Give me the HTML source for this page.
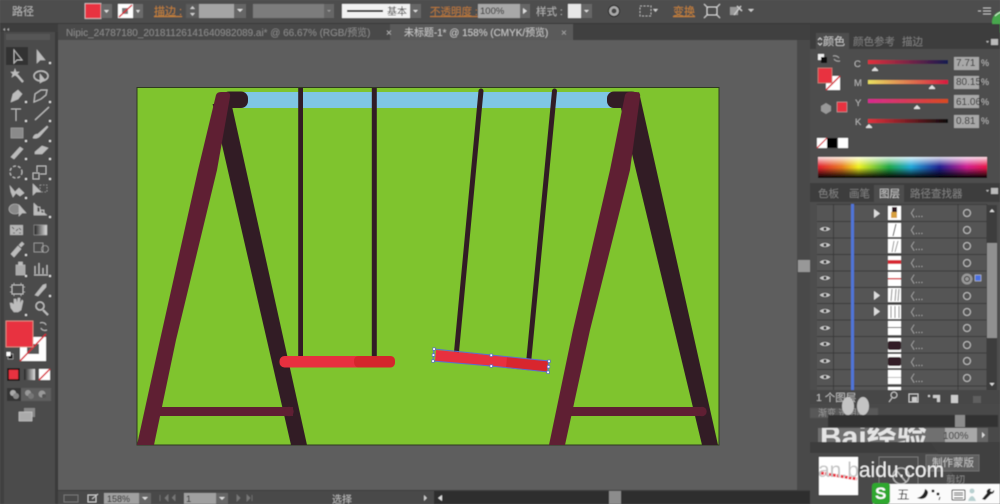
<!DOCTYPE html>
<html lang="zh"><head><meta charset="utf-8"><title>Illustrator</title>
<style>
html,body{margin:0;padding:0;width:1000px;height:504px;overflow:hidden;background:#5e5e5e}
svg{display:block}
text{font-family:"Liberation Sans","Noto Sans CJK SC",sans-serif}
</style></head><body>
<svg width="1000" height="504" viewBox="0 0 1000 504" xmlns="http://www.w3.org/2000/svg">
<defs><filter id="b" x="-5%" y="-5%" width="110%" height="110%"><feGaussianBlur stdDeviation="0.55"/></filter>
<clipPath id="wm"><rect x="810" y="428" width="128" height="14"/></clipPath>
<linearGradient id="spH" x1="0" x2="1"><stop offset="0" stop-color="#e02030"/><stop offset=".14" stop-color="#e87a20"/><stop offset=".24" stop-color="#eef020"/><stop offset=".42" stop-color="#20a848"/><stop offset=".55" stop-color="#20a8d8"/><stop offset=".72" stop-color="#202090"/><stop offset=".88" stop-color="#d02090"/><stop offset="1" stop-color="#e81848"/></linearGradient>
<linearGradient id="spW" x1="0" x2="0" y1="0" y2="1"><stop offset="0" stop-color="#fff" stop-opacity=".85"/><stop offset=".45" stop-color="#fff" stop-opacity="0"/><stop offset=".5" stop-color="#000" stop-opacity="0"/><stop offset="1" stop-color="#000"/></linearGradient>
<linearGradient id="c1" x1="0" x2="1"><stop offset="0" stop-color="#e2303c"/><stop offset="1" stop-color="#141a50"/></linearGradient>
<linearGradient id="c2" x1="0" x2="1"><stop offset="0" stop-color="#e8e060"/><stop offset="1" stop-color="#d81840"/></linearGradient>
<linearGradient id="c3" x1="0" x2="1"><stop offset="0" stop-color="#d82a90"/><stop offset="1" stop-color="#d84a20"/></linearGradient>
<linearGradient id="c4" x1="0" x2="1"><stop offset="0" stop-color="#e2303c"/><stop offset="1" stop-color="#0c0c0c"/></linearGradient>
<linearGradient id="gr" x1="0" x2="1"><stop offset="0" stop-color="#222"/><stop offset="1" stop-color="#ddd"/></linearGradient>
</defs>

<!-- base -->
<rect width="1000" height="504" fill="#5e5e5e"/>

<!-- artboard -->
<rect x="136.500" y="87" width="583" height="358.500" fill="#2e3a20"/>
<rect x="137.500" y="88" width="581" height="356.500" fill="#7fc42e"/>
<rect x="240" y="92" width="375" height="16" fill="#7fc6e4"/>
<!-- left frame -->
<polygon points="212.600,104 231.500,104 307,445 291,445" fill="#321c25"/>
<rect x="222" y="91.500" width="26" height="16.500" rx="7" fill="#321c25"/>
<polygon points="160,407 293,407 293,416 155,416" fill="#5f1f33"/>
<circle cx="289" cy="411.500" r="4.700" fill="#5f1f33"/>
<path d="M216,95 Q217,92 221,92 L226,92 Q231,92 230,97 L217,170 L176,340 L154,445 L137,445 L160,340 L198,170 Z" fill="#5f1f33"/>
<!-- right frame -->
<polygon points="620,104 639,92 718,445 702,445" fill="#321c25"/>
<rect x="607" y="91.500" width="32" height="16.500" rx="7" fill="#321c25"/>
<polygon points="573,407 703,407 703,416 570,416" fill="#5f1f33"/>
<circle cx="702" cy="411.500" r="4.700" fill="#5f1f33"/>
<path d="M625,95 Q626,92 630,92 L636,92 Q641,92 640,97 L630,170 L590,330 L565,445 L549,445 L573,330 L610,170 Z" fill="#5f1f33"/>
<!-- ropes -->
<rect x="298.200" y="88" width="4.800" height="269" fill="#321c25"/>
<rect x="371.800" y="88" width="5" height="269" fill="#321c25"/>
<path d="M481,91 L456.500,352" stroke="#321c25" stroke-width="5" stroke-linecap="round" fill="none"/>
<path d="M554.500,91 L529,358" stroke="#321c25" stroke-width="5" stroke-linecap="round" fill="none"/>
<!-- seat straight -->
<rect x="279.500" y="356" width="115.500" height="11.500" rx="5" fill="#e8303f"/>
<path d="M354,361 Q354,356 359,356 L390,356 Q395,356 395,361.500 Q395,367.500 390,367.500 L359,367.500 Q354,367.500 354,361 Z" fill="#d4262c"/>
<!-- seat tilted -->
<polygon points="436,350 548,361 547,372 435,361" fill="#e8303f"/>
<polygon points="507,357 548,361 547,372 506,368" fill="#d8262e"/>
<polygon points="434,349 491,355 549,361 548,372 491,366 433,361" fill="none" stroke="#5a6fd0" stroke-width="1"/>
<g fill="#fff" stroke="#5a6fd0" stroke-width=".7">
<rect x="432.800" y="347.800" width="2.500" height="2.500"/><rect x="432.200" y="353.800" width="2.500" height="2.500"/><rect x="431.800" y="359.800" width="2.500" height="2.500"/>
<rect x="490" y="354" width="2.500" height="2.500"/><rect x="490" y="364.800" width="2.500" height="2.500"/>
<rect x="547.800" y="360" width="2.500" height="2.500"/><rect x="547.300" y="365.500" width="2.500" height="2.500"/><rect x="546.800" y="371" width="2.500" height="2.500"/>
</g>

<g filter="url(#b)">
<!-- top control bar -->
<rect width="1000" height="24" fill="#4e4e4e"/>
<rect y="23" width="1000" height="1" fill="#383838"/>
<text x="12" y="15" font-size="11" fill="#b4b4b4">路径</text>
<rect x="85" y="3.500" width="16" height="15" fill="#e8303f" stroke="#ddd" stroke-width=".7"/>
<rect x="101" y="4" width="11" height="14" fill="#6a6a6a"/><path d="M104,10h5l-2.500,3z" fill="#ddd"/>
<rect x="118" y="4" width="15" height="14" fill="#fff"/><rect x="122" y="8" width="6" height="6" fill="#555" opacity=".8"/><path d="M119,17L132,5" stroke="#d82030" stroke-width="1.500"/>
<rect x="133" y="4" width="10" height="14" fill="#6a6a6a"/><path d="M136,10h4l-2,3z" fill="#ddd"/>
<text x="154" y="15" font-size="11" fill="#c88238" text-decoration="underline">描边 :</text>
<rect x="186" y="4" width="13" height="14" fill="#5c5c5c"/><path d="M190,9l2.500,-3 2.500,3zM190,13l2.500,3 2.500,-3z" fill="#ccc"/>
<rect x="199" y="4" width="35" height="14" fill="#a4a4a4"/>
<rect x="234" y="4" width="12" height="14" fill="#666"/><path d="M237,9h6l-3,3z" fill="#ddd"/>
<rect x="253" y="4" width="71" height="14" fill="#7c7c7c"/>
<rect x="324" y="4" width="10" height="14" fill="#666"/><path d="M327,10h4l-2,2z" fill="#999"/>
<rect x="342" y="4" width="68" height="14" fill="#f2f2f2"/>
<rect x="347" y="10" width="36" height="2" fill="#111"/>
<text x="387" y="15" font-size="10" fill="#444">基本</text>
<rect x="410" y="4" width="11" height="14" fill="#666"/><path d="M413,10h5l-2.500,2.500z" fill="#ddd"/>
<text x="430" y="15" font-size="10.500" fill="#c07a38" text-decoration="underline">不透明度 :</text>
<rect x="478" y="4" width="42" height="14" fill="#a8a8a8"/>
<text x="480" y="14" font-size="9.500" fill="#222">100%</text>
<rect x="520" y="4" width="10" height="14" fill="#666"/><path d="M523,8l4,3-4,3z" fill="#ddd"/>
<text x="536" y="15" font-size="10.500" fill="#b4b4b4">样式 :</text>
<rect x="568" y="4" width="13" height="14" fill="#e8e8e8"/>
<rect x="581" y="4" width="11" height="14" fill="#666"/><path d="M584,10h5l-2.500,2.500z" fill="#ddd"/>
<circle cx="614" cy="11" r="5.500" fill="#aaa" stroke="#222" stroke-width="1"/><circle cx="614" cy="11" r="2.500" fill="#444"/>
<rect x="640" y="6" width="11" height="10" fill="none" stroke="#aaa" stroke-dasharray="2 1.500"/><path d="M653,9h5l-2.500,3z" fill="#ccc"/>
<text x="673" y="15" font-size="11" fill="#c88238" text-decoration="underline">变换</text>
<path d="M707,7h10v8h-10zM704,4l4,4M720,4l-4,4M704,18l4,-4M720,18l-4,-4" fill="none" stroke="#ccc" stroke-width="1.100"/>
<path d="M730,7h8v8h-8z" fill="#999"/><path d="M734,15l7,-9M737,6l5,5" stroke="#ccc" stroke-width="1.300"/><path d="M748,9h6l-3,3z" fill="#ccc"/>
<path d="M978,11h3M983,8h8M983,11h8M983,14h8" stroke="#bbb" stroke-width="1"/>
<circle cx="1003" cy="22" r="11" fill="#46a84e"/><path d="M995,16q4,-4 8,-4" stroke="#d0f0d0" fill="none"/>

<!-- tab bar -->
<rect y="24" width="1000" height="16" fill="#404040"/>
<rect x="58" y="24" width="332" height="16" fill="#4a4a4a"/>
<rect x="390" y="24" width="183" height="16" fill="#5a5a5a"/>
<text x="66" y="36" font-size="9.950" fill="#8a8a8a">Nipic_24787180_20181126141640982089.ai* @ 66.67% (RGB/预览)</text>
<text x="386" y="36" font-size="10" fill="#bbb">×</text>
<text x="404" y="36" font-size="9.950" fill="#c8c8c8">未标题-1* @ 158% (CMYK/预览)</text>
<text x="561" y="36" font-size="10" fill="#aaa">×</text>

<!-- left tools -->
<rect y="24" width="58" height="480" fill="#4c4c4c"/>
<rect x="0" y="24" width="58" height="8" fill="#3c3c3c"/>
<path d="M5,28l-2,1.500 2,1.500zM9,28l-2,1.500 2,1.500z" fill="#aaa"/>
<rect x="6" y="34" width="44" height="6" fill="#565656"/>
<rect x="0" y="32" width="4" height="472" fill="#404040"/><rect x="55" y="32" width="3" height="472" fill="#3a3a3a"/>
<rect x="6" y="47" width="22" height="18" fill="#333"/>
<g fill="#bcbcbc" stroke="#bcbcbc" stroke-width=".6">
<path d="M14,50l0,13 3,-3 5,0z" fill="#333" stroke-width="1"/>
<path d="M37,50l0,13 3,-3 5,0z"/>
<path d="M15,69l1,3 3,0 -2,2 1,3 -3,-2 -3,2 1,-3 -2,-2 3,0z"/><path d="M17,75l6,7" stroke-width="2.200"/>
<ellipse cx="41" cy="76" rx="7" ry="5" fill="none" stroke-width="1.500"/><path d="M40,74l0,9 5,-3z"/>
<path d="M11,102l2,-8 5,-4 4,4 -4,5z"/>
<path d="M34,102l1,-8 6,-4 6,0 -1,5 -5,4z" fill="none" stroke-width="1.200"/>
<path d="M11,109h10M16,109v12" fill="none" stroke-width="1"/>
<path d="M35,120l14,-13" fill="none" stroke-width="1.200"/>
<rect x="11" y="128" width="12" height="10" fill="#8a8a8a" stroke="#aaa"/>
<path d="M33,138q1,-4 5,-4l9,-8 1,1 -8,9q-3,3 -7,2z"/>
<path d="M11,157l9,-10 3,2 -9,10z"/>
<path d="M35,152l7,-6 6,2 -6,6 -7,0z"/>
<circle cx="16" cy="172" r="6" fill="none" stroke-dasharray="3 2" stroke-width="1.200"/><path d="M33,179v-6h6v6zM37,172v-6h9v8h-6" fill="none" stroke-width="1"/>
<path d="M10,186l5,6 4,-4 5,5 -4,3 -4,-3 -3,4 -2,-5z"/>
<path d="M33,184l0,11 3,-3 5,0z"/><rect x="40" y="185" width="7" height="7" fill="none" stroke-dasharray="1.500 1.500"/>
<ellipse cx="15" cy="209" rx="6" ry="5" fill="#888"/><path d="M19,205l0,11 3,-3 4,0z"/>
<path d="M34,203v12h13M37,207h3v5h-3zM41,210h3v3h-3z" stroke-width=".8"/>
<rect x="10" y="225" width="13" height="10" fill="#b4b4b4" stroke="none"/><path d="M12,227l2,2M16,231l2,-2M19,228l2,2M13,233h2M19,233h2" stroke="#222" fill="none"/>
<rect x="34" y="225" width="13" height="10" fill="url(#gr)" stroke="#aaa" stroke-width=".5"/>
<path d="M11,254l7,-8 3,3 -7,8zM19,245l3,-3 2,2 -3,3z"/>
<rect x="34" y="243" width="9" height="9" fill="none"/><circle cx="45" cy="249" r="3.500" fill="none"/>
<rect x="16" y="265" width="9" height="10" fill="#aaa"/><rect x="18.500" y="262" width="4" height="3"/>
<path d="M35,274v-8M39,274v-11M43,274v-6M47,274v-9M34,275h14" fill="none" stroke-width="1.300"/>
<rect x="12" y="285" width="11" height="9" fill="none" stroke-width="1"/><path d="M10,287h2M23,287h2M10,292h2M23,292h2M14,283v2M21,283v2M14,294v2M21,294v2" fill="none" stroke-width=".8"/>
<path d="M35,295l8,-10 3,-1 0,3 -8,9z"/>
<path d="M11,308l-1,-5 2,0 2,2 0,-6 2,0 1,5 1,-6 2,0 0,6 2,-4 1,1 -2,9 -3,2 -4,0z"/>
<circle cx="40" cy="306" r="4" fill="none" stroke-width="1.500"/><path d="M43,310l5,5" stroke-width="2"/>
</g>
<g fill="#ddd"><rect x="49" y="62" width="2" height="2"/><rect x="25" y="101" width="2" height="2"/><rect x="49" y="101" width="2" height="2"/><rect x="25" y="120" width="2" height="2"/><rect x="49" y="120" width="2" height="2"/><rect x="25" y="140" width="2" height="2"/><rect x="49" y="140" width="2" height="2"/><rect x="25" y="158" width="2" height="2"/><rect x="49" y="158" width="2" height="2"/><rect x="25" y="178" width="2" height="2"/><rect x="49" y="178" width="2" height="2"/><rect x="25" y="197" width="2" height="2"/><rect x="49" y="216" width="2" height="2"/><rect x="25" y="254" width="2" height="2"/><rect x="25" y="275" width="2" height="2"/><rect x="49" y="275" width="2" height="2"/><rect x="49" y="295" width="2" height="2"/><rect x="25" y="314" width="2" height="2"/></g>
<rect x="20" y="337" width="26" height="24" fill="#fff"/>
<rect x="27" y="344" width="12" height="10" fill="#555"/>
<path d="M20,361L46,334" stroke="#d82030" stroke-width="1.500"/>
<rect x="6" y="321" width="27" height="26" fill="#e8303f" stroke="#e29a8f" stroke-width=".8"/>
<path d="M40,323a4,3 0 0 1 6,2M47,330a4,3 0 0 1 -6,-2" stroke="#bbb" fill="none"/>
<rect x="8" y="354" width="5" height="5" fill="#111" stroke="#ddd" stroke-width=".5"/><rect x="6.500" y="352" width="4" height="4" fill="#fff"/>
<rect x="8" y="369" width="11" height="11" fill="#e8303f" stroke="#111" stroke-width="1.500"/>
<rect x="24" y="369" width="11" height="11" fill="url(#gr)"/>
<rect x="39" y="369" width="11" height="11" fill="#fff"/><path d="M39,380L50,369" stroke="#d82030" stroke-width="1.500"/>
<rect x="7" y="388" width="44" height="13" fill="#5f5f5f"/><rect x="7" y="388" width="14" height="13" fill="#363636"/>
<circle cx="13" cy="393" r="3" fill="#aaa"/><circle cx="16" cy="396" r="3" fill="#888"/>
<circle cx="28" cy="393" r="3" fill="#999"/><circle cx="31" cy="396" r="3" fill="#777"/>
<circle cx="42" cy="394" r="3.500" fill="#999"/><circle cx="44" cy="396" r="2" fill="#555"/>
<rect x="24" y="408" width="11" height="9" fill="#888"/><rect x="19" y="412" width="13" height="9" fill="#aaa" stroke="#ddd" stroke-width=".5"/>

<!-- vertical scrollbar -->
<rect x="797" y="40" width="13" height="450" fill="#4a4a4a"/>
<rect x="798" y="260" width="12" height="12" fill="#989898"/>

<!-- status bar -->
<rect x="58" y="490" width="752" height="14" fill="#4a4a4a"/>
<rect x="58" y="490" width="752" height="1" fill="#3c3c3c"/>
<rect x="64" y="495" width="14" height="7" fill="none" stroke="#777"/>
<path d="M88,495h8v7h-8zM92,499l6,-5" fill="none" stroke="#ccc"/>
<rect x="104" y="493" width="35" height="11" fill="#a0a0a0"/>
<text x="107" y="502" font-size="9" fill="#222">158%</text>
<rect x="139" y="493" width="12" height="11" fill="#666"/><path d="M142,497h6l-3,3z" fill="#ddd"/>
<path d="M160,495v6M165,498l3,-3v6zM172,498l3,-3v6" fill="#777" stroke="#777" stroke-width=".8"/>
<rect x="184" y="493" width="32" height="11" fill="#a0a0a0"/>
<text x="186" y="502" font-size="9.500" fill="#222">1</text>
<rect x="216" y="493" width="12" height="11" fill="#666"/><path d="M219,497h6l-3,3z" fill="#ddd"/>
<path d="M237,495l3,3-3,3zM247,495l3,3-3,3zM252,495v6" fill="#777" stroke="#777" stroke-width=".8"/>
<text x="332" y="503" font-size="10" fill="#bcbcbc">选择</text>
<rect x="434" y="491" width="376" height="13" fill="#2f2f2f"/>
<path d="M424,495l3,3-3,3z" fill="#ccc"/>
<path d="M442,495l-4,3 4,3z" fill="#ddd"/>
<rect x="609" y="491" width="12" height="13" fill="#8c8c8c"/>

<!-- right dock -->
<rect x="810" y="24" width="190" height="480" fill="#4e4e4e"/>
<rect x="810" y="24" width="190" height="9" fill="#3e3e3e"/>
<rect x="810" y="33" width="190" height="16" fill="#3c3c3c"/>
<rect x="816" y="33" width="33" height="16" fill="#4e4e4e"/>
<path d="M818,40l2,-2 2,2M818,43l2,2 2,-2" fill="none" stroke="#ccc"/>
<text x="823" y="45" font-size="11" fill="#c8c8c8">颜色</text>
<text x="853" y="45" font-size="10.500" fill="#808080">颜色参考</text>
<text x="902" y="45" font-size="10.500" fill="#808080">描边</text>
<path d="M986,41h3l-1.500,2zM991,39h7v6h-7z" fill="#bbb"/>
<rect x="818" y="54" width="6" height="6" fill="#eee"/><rect x="821" y="57" width="6" height="6" fill="#111"/>
<path d="M833,56a5,4 0 0 1 6,2M840,61a5,4 0 0 1 -6,-2" stroke="#aaa" fill="none"/>
<rect x="826" y="76" width="14" height="14" fill="#fff"/><path d="M826,90L840,76" stroke="#d82030" stroke-width="1.500"/>
<rect x="818" y="68" width="14" height="15" fill="#e8303f" stroke="#c88a80" stroke-width=".7"/>
<path d="M821,106l5,-3 5,3v5l-5,3-5,-3z" fill="#999"/>
<rect x="837" y="102" width="10" height="10" fill="#e8303f" stroke="#bbb" stroke-width=".5"/>
<text x="854" y="67" font-size="9.500" fill="#b8b8b8">C</text>
<text x="854" y="86" font-size="9.500" fill="#b8b8b8">M</text>
<text x="855" y="106" font-size="9.500" fill="#b8b8b8">Y</text>
<text x="855" y="125" font-size="9.500" fill="#b8b8b8">K</text>
<rect x="868" y="60" width="80" height="4" fill="url(#c1)"/>
<rect x="868" y="80" width="80" height="4" fill="url(#c2)"/>
<rect x="868" y="99" width="80" height="4" fill="url(#c3)"/>
<rect x="868" y="119" width="80" height="4" fill="url(#c4)"/>
<g fill="#e0e0e0"><path d="M872,70l3,-3 3,3v1h-6z"/><path d="M929,88l3,-3 3,3v1h-6z"/><path d="M914,108l3,-3 3,3v1h-6z"/><path d="M866,127l3,-3 3,3v1h-6z"/></g>
<g fill="#a8a8a8"><rect x="954" y="57" width="25" height="13"/><rect x="954" y="76" width="25" height="13"/><rect x="954" y="95" width="25" height="13"/><rect x="954" y="115" width="25" height="13"/></g>
<g font-size="10" fill="#2a2a2a" style="font-family:'Liberation Mono',monospace"><text x="956" y="66">7.71</text><text x="956" y="85">80.15</text><text x="956" y="105">61.06</text><text x="956" y="124">0.81</text></g>
<g font-size="9" fill="#b8b8b8"><text x="981" y="66">%</text><text x="981" y="85">%</text><text x="981" y="105">%</text><text x="981" y="124">%</text></g>
<rect x="817" y="138" width="10" height="10" fill="#fff"/><path d="M817,148l10,-10" stroke="#d82030" stroke-width="1.200"/>
<rect x="827" y="138" width="10" height="10" fill="#000"/><rect x="838" y="138" width="10" height="10" fill="#fff"/>
<rect x="818" y="157" width="169" height="21" fill="url(#spH)"/>
<rect x="818" y="157" width="169" height="21" fill="url(#spW)"/>

<rect x="810" y="183" width="190" height="19" fill="#3e3e3e"/>
<rect x="874" y="185" width="30" height="17" fill="#4e4e4e"/>
<text x="818" y="197" font-size="10.500" fill="#808080">色板</text>
<text x="849" y="197" font-size="10.500" fill="#808080">画笔</text>
<text x="879" y="197" font-size="10.500" fill="#cccccc">图层</text>
<text x="910" y="197" font-size="10.500" fill="#808080">路径查找器</text>
<path d="M986,190h3l-1.500,2zM991,188h7v6h-7z" fill="#bbb"/>

<!-- layers list -->
<rect x="817" y="204" width="170" height="186" fill="#555"/>
<g stroke="#3a3a3a" stroke-width="1">
<path d="M817,204.500h170M817,221.500h170M817,238h170M817,254.500h170M817,271h170M817,287.500h170M817,303.500h170M817,320h170M817,336.500h170M817,353h170M817,369.500h170M817,386h170"/>
<path d="M833.500,204v186M958,204v186M987,204v186"/>
</g>
<rect x="851" y="204" width="3" height="186" fill="#4f74d8"/>
<g fill="#c8c8c8" stroke="#333" stroke-width=".5">
<path d="M819,229q6,-5 12,0q-6,5 -12,0z M819,245q6,-5 12,0q-6,5 -12,0z M819,262q6,-5 12,0q-6,5 -12,0z M819,278q6,-5 12,0q-6,5 -12,0z M819,295q6,-5 12,0q-6,5 -12,0z M819,311q6,-5 12,0q-6,5 -12,0z M819,328q6,-5 12,0q-6,5 -12,0z M819,344q6,-5 12,0q-6,5 -12,0z M819,361q6,-5 12,0q-6,5 -12,0z M819,377q6,-5 12,0q-6,5 -12,0z"/>
</g>
<g fill="#333"><circle cx="825" cy="229" r="1.500"/><circle cx="825" cy="245" r="1.500"/><circle cx="825" cy="262" r="1.500"/><circle cx="825" cy="278" r="1.500"/><circle cx="825" cy="295" r="1.500"/><circle cx="825" cy="311" r="1.500"/><circle cx="825" cy="328" r="1.500"/><circle cx="825" cy="344" r="1.500"/><circle cx="825" cy="361" r="1.500"/><circle cx="825" cy="377" r="1.500"/></g>
<g fill="#ddd"><path d="M874,209l6,4.500-6,4.500z"/><path d="M874,291l6,4.500-6,4.500z"/><path d="M874,307l6,4.500-6,4.500z"/></g>
<!-- thumbs -->
<g fill="#fff"><rect x="888" y="206" width="13" height="14"/><rect x="888" y="223" width="13" height="14"/><rect x="888" y="239" width="13" height="14"/><rect x="888" y="256" width="13" height="14"/><rect x="888" y="272" width="13" height="14"/><rect x="888" y="288" width="13" height="14"/><rect x="888" y="305" width="13" height="14"/><rect x="888" y="321" width="13" height="14"/><rect x="888" y="338" width="13" height="14"/><rect x="888" y="354" width="13" height="14"/><rect x="888" y="370" width="13" height="14"/><rect x="888" y="387" width="13" height="3"/></g>
<rect x="892" y="207" width="5" height="5" fill="#321c25"/><rect x="891" y="212" width="6" height="6" fill="#d8a040"/>
<path d="M896,224l-3,12" stroke="#555" stroke-width="1"/><path d="M898,241l-3,11M894,241l-2,11" stroke="#777" stroke-width=".8"/>
<rect x="888" y="260" width="13" height="4" fill="#d82a35"/><rect x="888" y="278" width="13" height="1.500" fill="#d82a35"/>
<path d="M892,289l-1,12M896,289l-1,12M899,289l-1,12M891,306v12M895,306v12M899,306v12" stroke="#888" stroke-width="1"/>
<rect x="888" y="327" width="13" height="1" fill="#555"/><rect x="888" y="341" width="13" height="9" rx="2" fill="#321c25"/><rect x="888" y="357" width="13" height="9" rx="2" fill="#321c25"/><rect x="888" y="377" width="13" height=".8" fill="#aaa"/>
<g font-size="10" fill="#b0b0b0"><text x="905" y="217">〈...</text><text x="905" y="234">〈...</text><text x="905" y="250">〈...</text><text x="905" y="267">〈...</text><text x="905" y="283">〈...</text><text x="905" y="300">〈...</text><text x="905" y="316">〈...</text><text x="905" y="333">〈...</text><text x="905" y="349">〈...</text><text x="905" y="366">〈...</text><text x="905" y="382">〈...</text></g>
<g fill="none" stroke="#c0c0c0" stroke-width="1"><circle cx="967" cy="213" r="3.500"/><circle cx="967" cy="230" r="3.500"/><circle cx="967" cy="246" r="3.500"/><circle cx="967" cy="263" r="3.500"/><circle cx="967" cy="296" r="3.500"/><circle cx="967" cy="312" r="3.500"/><circle cx="967" cy="328" r="3.500"/><circle cx="967" cy="345" r="3.500"/><circle cx="967" cy="361" r="3.500"/><circle cx="967" cy="378" r="3.500"/></g>
<circle cx="967" cy="279" r="5.500" fill="#999"/><circle cx="967" cy="279" r="2.500" fill="none" stroke="#333"/>
<rect x="975" y="275" width="6" height="6" fill="#4a70e0" stroke="#ddd" stroke-width=".5"/>
<rect x="987" y="205" width="10" height="185" fill="#3c3c3c"/>
<rect x="987" y="243" width="10" height="95" fill="#909090"/>
<path d="M989.500,212l2.500,-3 2.500,3zM989.500,383l2.500,3 2.500,-3z" fill="#ddd"/>
<rect x="810" y="390" width="190" height="14" fill="#474747"/>
<text x="816" y="401" font-size="10.500" fill="#c0c0c0">1 个图层</text>
<circle cx="894" cy="395" r="3" fill="none" stroke="#ccc"/><path d="M892,398l-3,4" stroke="#ccc"/>
<rect x="909" y="394" width="9" height="8" fill="none" stroke="#ccc"/><rect x="912" y="397" width="5" height="5" fill="#ccc"/>
<path d="M928,395h2v2h-2zM933,395h7v7h-3v-4h-4z" fill="#ccc"/>
<path d="M951,395h7v8h-7z" fill="#ccc"/>
<rect x="973" y="396" width="8" height="7" fill="#5f5f5f"/>

<!-- bottom panel + watermark -->
<rect x="810" y="404" width="190" height="100" fill="#4a4a4a"/>
<rect x="810" y="408" width="68" height="10" fill="#585858"/>
<text x="818" y="416" font-size="9" fill="#999">渐变 透明度</text>
<rect x="828" y="415" width="170" height="12" fill="#333"/>
<rect x="955" y="415" width="10" height="12" fill="#8c8c8c"/>
<rect x="818" y="428" width="170" height="14" fill="#6f6f6f"/>
<rect x="945" y="428" width="32" height="14" fill="#a8a8a8"/>
<text x="943" y="439" font-size="10" fill="#333">100%</text>
<rect x="977" y="428" width="11" height="14" fill="#666"/><path d="M982,432l3,3-3,3z" fill="#ddd"/>
<rect x="810" y="442" width="190" height="11" fill="#3e3e3e"/>
<polygon points="930,442 1000,442 1000,484 960,484" fill="#3f3f3f"/>
<text x="820" y="447" font-size="30" font-weight="bold" fill="#e4e4e4" clip-path="url(#wm)">Bai经验</text>
<ellipse cx="848" cy="406" rx="6" ry="9" fill="#c4c4c4"/><ellipse cx="863" cy="406" rx="6" ry="9" fill="#c4c4c4"/>
<rect x="819" y="457" width="39" height="38" fill="#fff"/>
<path d="M821,473l36,6" stroke="#e8303f" stroke-width="3" stroke-dasharray="3 1"/>
<rect x="879" y="457" width="39" height="30" fill="#4c4c4c" stroke="#777"/>
<rect x="926" y="455" width="53" height="16" fill="#5f5f5f" stroke="#6f6f6f"/>
<text x="932" y="466" font-size="10.500" fill="#c4c4c4">制作蒙版</text>
<text x="946" y="483" font-size="9.500" fill="#888">剪切</text>
<circle cx="901" cy="476" r="8" fill="none" stroke="#ddd" stroke-width="1.500" opacity=".7"/>
<path d="M896,470l10,12" stroke="#ddd" stroke-width="1.500" opacity=".7"/>
<text x="818" y="477" font-size="21" fill="#efefef"><tspan fill="#c4c4c4">an.b</tspan>aidu.com</text>

<!-- IME bar -->
<rect x="873" y="484" width="127" height="20" fill="#fbfbfb"/>
<rect x="872" y="483" width="18" height="21" rx="3" fill="#2ea82e"/>
<text x="875" y="499" font-size="17" font-weight="bold" fill="#fff">S</text>
<text x="897" y="499" font-size="12.500" fill="#222">五</text>
<path d="M925,489q-1,7 -8,9q9,3 11,-5q0,-3 -3,-4z" fill="#222"/>
<circle cx="933" cy="491" r="1.500" fill="#222"/><circle cx="938" cy="494" r="1.500" fill="#222"/><path d="M940,497l-1,3" stroke="#222"/>
<rect x="952" y="490" width="13" height="10" rx="1" fill="none" stroke="#222"/><path d="M954,493h9M954,495h9M954,498h9" stroke="#222"/>
<circle cx="972" cy="491" r="2.500" fill="#b8d0d0"/><path d="M968,501q4,-10 8,0z" fill="#b8d0d0"/>
<path d="M985,500l6,-6a3,3 0 0 0 3,-4l-2,2-2,-1 1,-2a3,3 0 0 0 -4,4l-5,6z" fill="#222"/>
</g>
</svg>
</body></html>
